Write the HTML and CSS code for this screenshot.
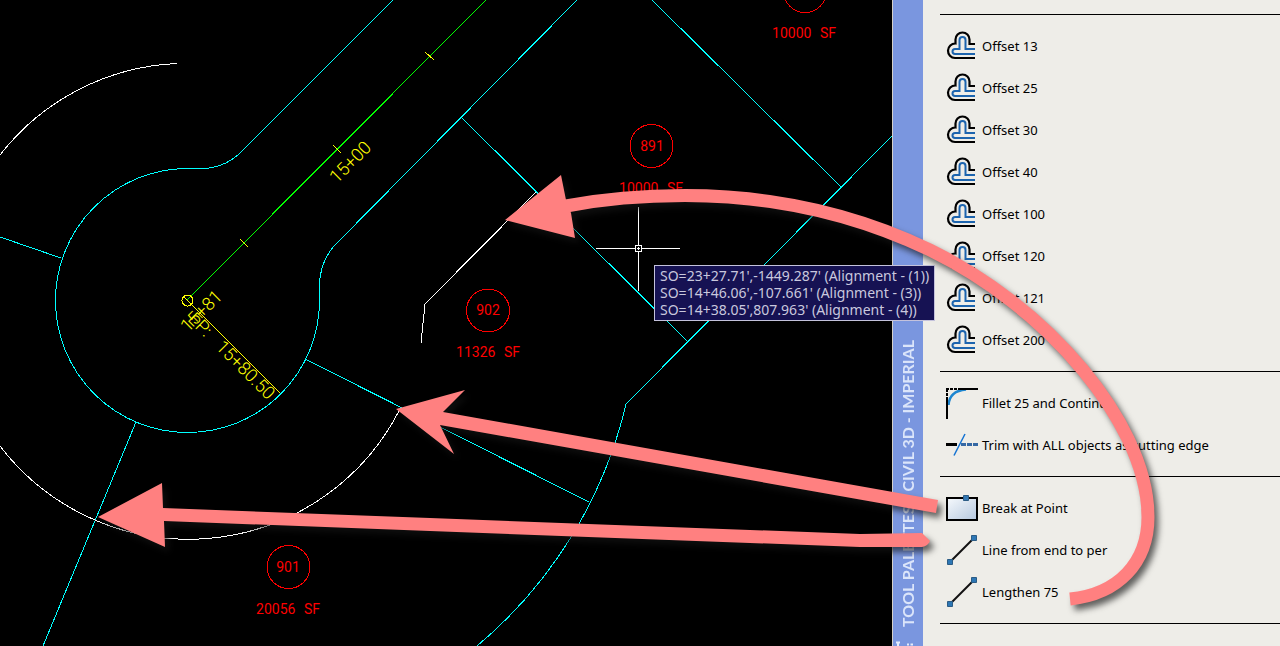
FILE: index.html
```
<!DOCTYPE html>
<html lang="en">
<head>
<meta charset="utf-8">
<title>Tool Palettes - Civil 3D - Imperial</title>
<link rel="stylesheet" href="styles.css">
</head>
<body class="workspace">
<svg class="symbols" aria-hidden="true">
  <symbol id="offset" viewBox="0 0 32 32">
    <path d="M29 13H23.500V8.500A7 7 0 0 0 9.500 8.500V12.500A7.200 7.200 0 0 0 9 27H29" fill="none" stroke="#000" stroke-width="2.200"/>
    <path d="M29 18H19.500V9A3 3 0 0 0 13.500 9V18H9A2.500 2.500 0 0 0 9 23H29" fill="none" stroke="#1c64ae" stroke-width="2"/>
  </symbol>
  <symbol id="line" viewBox="0 0 32 32">
    <path d="M4 27L28 3" stroke="#111" stroke-width="2"/>
    <path d="M1.500 24.500h5v5h-5zM25.500 .500h5v5h-5z" fill="#2d77b5" stroke="#2c5c85"/>
  </symbol>
</svg>

<main class="drawing">
  <svg class="plan" role="img" aria-label="Lot layout drawing">
    <g class="cyan">
      <path d="M393 0L243 150A58 58 0 0 1 205 168.500H187A132 132 0 1 0 319.500 300V285A62 62 0 0 1 334 246L577 0"/>
      <path d="M0 237L61 258M136 422L43 646M305 359L589 502M461 117L688 342M652 0L841 187"/>
      <path d="M892 136L626 404A450 450 0 0 1 477 646"/>
    </g>
    <g class="white">
      <path d="M0 155A237 237 0 0 1 177 63.500M0 446A237 237 0 0 0 400 409M536 192L425 304L421 343"/>
      <path d="M638.500 207V245M638.500 252V291M596 248.500H635M642 248.500H680M635.500 245.500h6v6h-6zM637 248.500h3M638.500 247v3"/>
    </g>
    <path class="green" d="M187 300L486 0"/>
    <g class="yellow">
      <path d="M333 145L341 153M425 52L434 60M240 239L248 247M183 296L280 393"/>
      <circle cx="187.500" cy="300.500" r="5.500"/>
    </g>
    <g class="red">
      <circle cx="805" cy="-9" r="21.500"/>
      <circle cx="651.500" cy="146" r="21.500"/>
      <circle cx="488" cy="310.500" r="21.500"/>
      <circle cx="288.500" cy="567" r="21.500"/>
    </g>
    <g class="station">
      <text transform="translate(337 184) rotate(-45)">15+00</text>
      <text transform="translate(188 333) rotate(-45)">15+81</text>
      <text transform="translate(187 320) rotate(45)">EP: <tspan dx="10">15+80.50</tspan></text>
    </g>
    <g class="lot">
      <text x="804" y="38">10000 <tspan dx="5">SF</tspan></text>
      <text x="652" y="151">891</text>
      <text x="651" y="193">10000 <tspan dx="5">SF</tspan></text>
      <text x="488" y="315">902</text>
      <text x="488" y="357">11326 <tspan dx="5">SF</tspan></text>
      <text x="288" y="572">901</text>
      <text x="288" y="614">20056 <tspan dx="5">SF</tspan></text>
    </g>
  </svg>
  <div class="tooltip" role="tooltip">
    <p>SO=23+27.71',-1449.287' (Alignment - (1))</p>
    <p>SO=14+46.06',-107.661' (Alignment - (3))</p>
    <p>SO=14+38.05',807.963' (Alignment - (4))</p>
  </div>
</main>

<aside class="palette" aria-label="Tool palettes">
  <header class="titlebar">
    <svg class="grip" viewBox="0 0 30 5" aria-hidden="true"><path d="M3 1.500H7M5 1.500V5M14 3.500H16M17.500 3.500H20" stroke="#e4ebfb" stroke-width="2"/></svg>
    <h1 class="title">TOOL PALETTES - CIVIL 3D - IMPERIAL</h1>
  </header>
  <div class="tools">
    <ul class="group">
      <li><button class="tool"><svg class="icon"><use href="#offset"/></svg>Offset 13</button></li>
      <li><button class="tool"><svg class="icon"><use href="#offset"/></svg>Offset 25</button></li>
      <li><button class="tool"><svg class="icon"><use href="#offset"/></svg>Offset 30</button></li>
      <li><button class="tool"><svg class="icon"><use href="#offset"/></svg>Offset 40</button></li>
      <li><button class="tool"><svg class="icon"><use href="#offset"/></svg>Offset 100</button></li>
      <li><button class="tool"><svg class="icon"><use href="#offset"/></svg>Offset 120</button></li>
      <li><button class="tool"><svg class="icon"><use href="#offset"/></svg>Offset 121</button></li>
      <li><button class="tool"><svg class="icon"><use href="#offset"/></svg>Offset 200</button></li>
    </ul>
    <ul class="group">
      <li><button class="tool"><svg class="icon" viewBox="0 0 32 32">
        <path d="M2.500 17C3 9 8 2.500 20 1.500" fill="none" stroke="#1d86d0" stroke-width="2.500"/>
        <path d="M1 12V0M0 1H13" fill="none" stroke="#000" stroke-width="2" stroke-dasharray="3 1"/>
        <path d="M1 12V31M12 1H32" stroke="#000" stroke-width="2"/>
      </svg>Fillet 25 and Continue</button></li>
      <li><button class="tool"><svg class="icon" viewBox="0 0 32 32">
        <path d="M0 14.500H11" stroke="#000" stroke-width="3"/>
        <path d="M15 14.500H32" stroke="#3568a4" stroke-width="3" stroke-dasharray="5 1"/>
        <path d="M8 25.500L19 4" stroke="#1272d2" stroke-width="1.500"/>
      </svg>Trim with ALL objects as cutting edge</button></li>
    </ul>
    <ul class="group">
      <li><button class="tool"><svg class="icon" viewBox="0 0 32 32">
        <defs><linearGradient id="sheet" x2="1" y2="1"><stop stop-color="#f7fafd"/><stop offset="1" stop-color="#b4c7de"/></linearGradient></defs>
        <path d="M1 5H31V27H1z" fill="url(#sheet)" stroke="#000" stroke-width="2"/>
        <path d="M17.500 2.500h5v5h-5z" fill="#3579b4" stroke="#2c5c85"/>
      </svg>Break at Point</button></li>
      <li><button class="tool"><svg class="icon"><use href="#line"/></svg>Line from end to per</button></li>
      <li><button class="tool"><svg class="icon"><use href="#line"/></svg>Lengthen 75</button></li>
    </ul>
    <ul class="group"></ul>
  </div>
</aside>

<svg class="callouts" aria-hidden="true">
  <path class="fill" d="M505 220L561 175L566 200L571 213L575 238Z"/>
  <path class="curve" d="M566 206C608 198 645 195.500 685 195.500C775 195.500 855 214 930 250C985 277 1040 318 1083 370C1117 411 1148 465 1148 517C1148 563 1118 594 1070 599"/>
  <path class="fill" d="M396 409L465 390L443 412L938 500L936 513L440 425L454 454Z"/>
  <path class="fill" d="M98 517L162 483L163 508L430 518L860 534L922 533L930 541Q928 546 922 547L860 547L430 531L164 521L165 547Z"/>
</svg>
</body>
</html>
```
FILE: styles.css
```
* { box-sizing: border-box; }

.workspace {
  position: relative;
  display: flex;
  min-height: 100vh;
  margin: 0;
  overflow: hidden;
  background: #000;
  font-family: "Noto Sans", "Open Sans", sans-serif;
  font-size: 14px;
}

.symbols { position: absolute; width: 0; height: 0; }

/* Drawing area */
.drawing { position: relative; flex: 1; min-width: 0; }

.plan { position: absolute; inset: 0; width: 100%; height: 100%; }
.plan path,
.plan circle { fill: none; shape-rendering: crispEdges; }
.cyan { stroke: #00ffff; }
.white { stroke: #ffffff; }
.green { stroke: #00ff00; }
.yellow { stroke: #ffff00; }
.red { stroke: #ff0000; }

.station { fill: #ffff00; font: 300 18px Roboto, sans-serif; }
.lot { fill: #ff0000; font: 400 14px Roboto, sans-serif; text-anchor: middle; }

.tooltip {
  position: absolute;
  left: 654px;
  top: 265px;
  z-index: 2;
  padding: 1px 5px 2px;
  border: 1px solid #c4c2dc;
  background: #161253;
  color: #c9c8de;
  line-height: 17px;
  white-space: nowrap;
}
.tooltip p { margin: 0; }

/* Palette */
.palette { display: flex; width: 388px; background: #eeede8; }

.titlebar {
  display: flex;
  flex-direction: column-reverse;
  align-items: center;
  gap: 14px;
  width: 31px;
  border-left: 1px solid #d4d0c8;
  background: #7a96df;
}
.grip { width: 30px; height: 5px; }
.title {
  margin: 0;
  color: #dbe5fa;
  font: 700 16px/18px Lato, sans-serif;
  white-space: nowrap;
  writing-mode: vertical-rl;
  transform: rotate(180deg);
}

.tools { flex: 1; padding: 14px 0 0 17px; }
.group {
  margin: 0;
  padding: 11px 0 9px;
  border-top: 1px solid #000;
  list-style: none;
}
.tool {
  display: flex;
  align-items: center;
  gap: 4px;
  width: 100%;
  height: 42px;
  padding: 0 6px 2px;
  border: 0;
  background: none;
  color: #000;
  font: inherit;
  font-size: 13px;
  white-space: nowrap;
}
.icon { flex: none; width: 32px; height: 32px; margin-top: 2px; }

/* Callout arrows */
.callouts {
  position: absolute;
  inset: 0;
  z-index: 3;
  width: 100%;
  height: 100%;
  pointer-events: none;
  filter: drop-shadow(4px 5px 3px rgb(20 20 20 / 65%));
}
.callouts .fill { fill: #ff8080; }
.callouts .curve { fill: none; stroke: #ff8080; stroke-width: 13px; }
```
